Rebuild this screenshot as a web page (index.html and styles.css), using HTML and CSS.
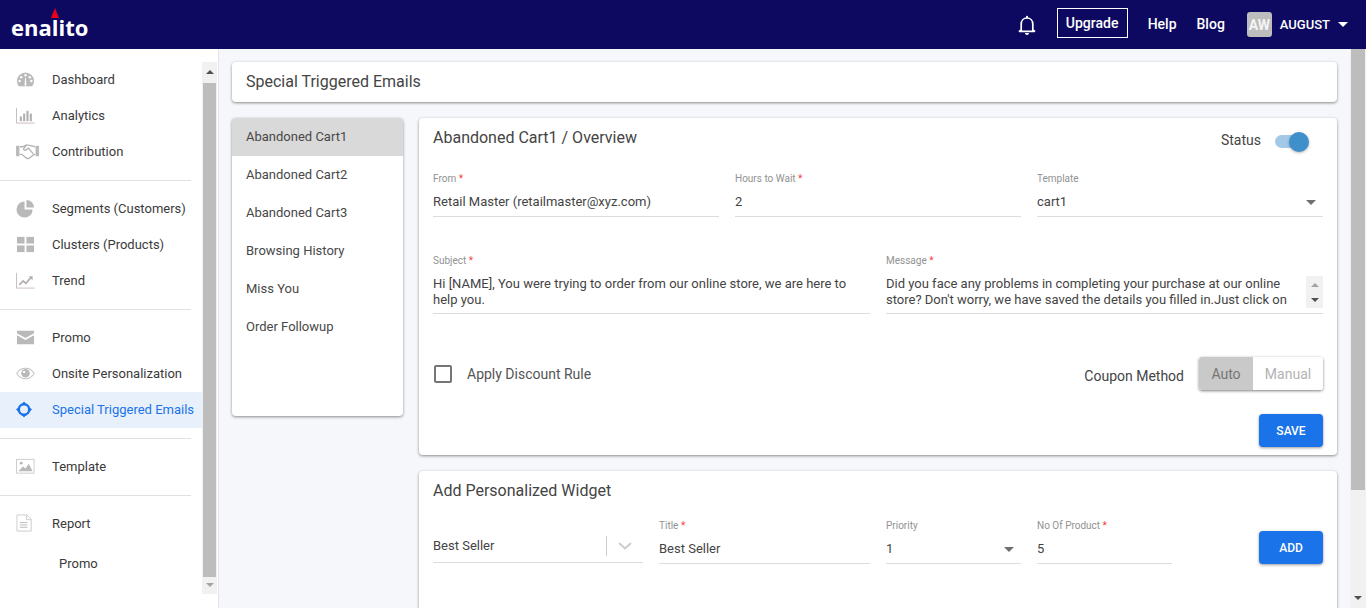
FILE: index.html
```html
<!DOCTYPE html>
<html lang="en">
<head>
<meta charset="utf-8">
<title>Special Triggered Emails</title>
<link rel="stylesheet" href="styles.css">
</head>
<body>
<div class="app">
  <header class="topbar">
    <div class="logo"><span class="logo-mark"></span>enalito</div>
    <div class="top-actions">
      <svg class="bell" width="18" height="20" viewBox="0 0 18 20"><path d="M3.2 15V9.2C3.2 5.6 5.6 3 9 3s5.800 2.600 5.800 6.200V15l1.700 1.300H1.500z" fill="none" stroke="#fff" stroke-width="1.700" stroke-linejoin="round"/><path d="M7 18h4a2 2 0 0 1-4 0zM8 1.800a1 1 0 0 1 2 0v1.500H8z" fill="#fff"/></svg>
      <a class="upgrade">Upgrade</a>
      <a class="top-link">Help</a>
      <a class="top-link">Blog</a>
      <div class="user">
        <span class="avatar">AW</span>
        <span class="user-name">AUGUST</span>
        <span class="caret"></span>
      </div>
    </div>
  </header>
  <div class="workspace">
    <aside class="sidebar">
      <nav class="nav">
        <div class="nav-group">
          <a class="nav-item"><svg class="ico" viewBox="0 0 20 20"><path d="M10 2.500a9 9 0 0 0-9 9c0 2.200.7 4 2 5.500h14c1.300-1.500 2-3.300 2-5.500a9 9 0 0 0-9-9z" fill="#b9b9b9"/><g fill="#fff"><circle cx="10" cy="5.500" r="1.300"/><circle cx="5.500" cy="7.500" r="1.300"/><circle cx="14.500" cy="7.500" r="1.300"/><circle cx="3.800" cy="11.500" r="1.300"/><circle cx="16.200" cy="11.500" r="1.300"/><path d="M9 15.500l.6-7h.8l.6 7a1 1 0 0 1-2 0z"/></g></svg><span>Dashboard</span></a>
          <a class="nav-item"><svg class="ico" viewBox="0 0 20 20"><path d="M.5 2v16h19" fill="none" stroke="#c9b9b9" stroke-width="1"/><g fill="#b0b0b0"><rect x="4" y="11" width="2.200" height="5"/><rect x="7.500" y="8" width="2.200" height="8"/><rect x="11" y="5" width="2.200" height="11"/><rect x="14.500" y="8" width="2.200" height="8"/></g></svg><span>Analytics</span></a>
          <a class="nav-item"><svg class="ico ico-wide" viewBox="0 0 24 20"><path d="M0 4h3.500v11H0zM20.500 4H24v11h-3.500z" fill="#b9b9b9"/><path d="M4 5h3l4-2 5 1 4 1M4 13h2l5 4c1 .6 2 .6 3-.2l5-3.800h1M11 3L8 7c-.6 1 1 2 2 1.500l3-2 5 6" fill="none" stroke="#b4b4b4" stroke-width="1.400"/></svg><span>Contribution</span></a>
        </div>
        <div class="nav-group">
          <a class="nav-item"><svg class="ico" viewBox="0 0 20 20"><path d="M9 2.500a8.500 8.500 0 1 0 8.500 8.500H9z" fill="#b9b9b9"/><path d="M11 1a8 8 0 0 1 8 8h-8z" fill="#b9b9b9"/></svg><span>Segments (Customers)</span></a>
          <a class="nav-item"><svg class="ico" viewBox="0 0 20 20"><g fill="#b9b9b9"><rect x="1" y="2" width="8" height="7"/><rect x="11" y="2" width="8" height="7"/><rect x="1" y="11" width="8" height="7"/><rect x="11" y="11" width="8" height="7"/></g></svg><span>Clusters (Products)</span></a>
          <a class="nav-item"><svg class="ico" viewBox="0 0 20 20"><path d="M.5 2v16h19" fill="none" stroke="#c9b9b9" stroke-width="1"/><path d="M3.500 14.500l4-4 3 2.500 5-6" fill="none" stroke="#b0b0b0" stroke-width="1.800"/><path d="M13.500 5.500H17.500V10z" fill="#b0b0b0"/></svg><span>Trend</span></a>
        </div>
        <div class="nav-group">
          <a class="nav-item"><svg class="ico" viewBox="0 0 20 20"><path d="M1 3h18v2.500l-9 5-9-5z" fill="#b9b9b9"/><path d="M1 7.500l9 5 9-5V17H1z" fill="#b9b9b9"/></svg><span>Promo</span></a>
          <a class="nav-item"><svg class="ico" viewBox="0 0 20 20"><path d="M.8 10C3 6.300 6.300 4.500 10 4.500s7 1.800 9.200 5.500C17 13.700 13.700 15.500 10 15.500S3 13.700.8 10z" fill="none" stroke="#c4c4c4" stroke-width="1.100"/><circle cx="10" cy="9.800" r="4.500" fill="#b9b9b9"/><circle cx="8.500" cy="8.300" r="1.300" fill="#fff"/></svg><span>Onsite Personalization</span></a>
          <a class="nav-item nav-active"><svg class="ico" viewBox="0 0 19 19"><circle cx="8" cy="9.500" r="5.200" fill="none" stroke="#1a73e8" stroke-width="2.400"/><g fill="#1a73e8"><path d="M8 1.500l2.800 3.200H5.200zM8 17.500l2.800-3.200H5.200zM0 9.500l3.200-2.800v5.600zM16 9.500l-3.200-2.800v5.600z"/></g></svg><span>Special Triggered Emails</span></a>
        </div>
        <div class="nav-group">
          <a class="nav-item"><svg class="ico" viewBox="0 0 20 20"><rect x=".5" y="2.500" width="18.500" height="14.500" fill="none" stroke="#ccc" stroke-width="1"/><path d="M2.500 15l5-5 2.500 2 3.500-5 4 8z" fill="#b9b9b9"/><circle cx="5.500" cy="6.500" r="1.500" fill="#b9b9b9"/></svg><span>Template</span></a>
        </div>
        <div class="nav-group">
          <a class="nav-item"><svg class="ico" viewBox="0 0 20 20"><path d="M1 1h10.500L16 5.500V18H1z" fill="none" stroke="#ccc" stroke-width="1"/><path d="M11 1v5h5" fill="none" stroke="#ccc"/><path d="M4 9h8M4 11.500h8M4 14h8" stroke="#b9b9b9" stroke-width="1"/></svg><span>Report</span></a>
          <a class="nav-item nav-sub"><span>Promo</span></a>
        </div>
      </nav>
      <div class="side-scroll">
        <span class="arrow-up"></span>
        <span class="side-thumb"></span>
        <span class="arrow-down arrow-light"></span>
      </div>
    </aside>
    <main class="content">
      <section class="card page-title">Special Triggered Emails</section>
      <div class="columns">
        <ul class="card list">
          <li class="list-item list-active">Abandoned Cart1</li>
          <li class="list-item">Abandoned Cart2</li>
          <li class="list-item">Abandoned Cart3</li>
          <li class="list-item">Browsing History</li>
          <li class="list-item">Miss You</li>
          <li class="list-item">Order Followup</li>
        </ul>
        <div class="detail">
          <section class="card overview">
            <div class="card-head">
              <h2 class="card-title">Abandoned Cart1 / Overview</h2>
              <div class="status">
                <span>Status</span>
                <span class="switch"><span class="knob"></span></span>
              </div>
            </div>
            <div class="row-three">
              <div class="field"><label class="lbl">From <i>*</i></label><div class="val">Retail Master (retailmaster@xyz.com)</div></div>
              <div class="field"><label class="lbl">Hours to Wait <i>*</i></label><div class="val">2</div></div>
              <div class="field"><label class="lbl">Template</label><div class="val val-select">cart1<span class="sel-caret"></span></div></div>
            </div>
            <div class="row-two">
              <div class="field"><label class="lbl">Subject <i>*</i></label><div class="val val-area">Hi [NAME], You were trying to order from our online store, we are here to help you.</div></div>
              <div class="field"><label class="lbl">Message <i>*</i></label>
                <div class="val val-area val-message">
                  <div class="msg-text">Did you face any problems in completing your purchase at our online store? Don't worry, we have saved the details you filled in.Just click on</div>
                  <div class="msg-scroll"><span class="arrow-up arrow-light"></span><span class="arrow-down"></span></div>
                </div>
              </div>
            </div>
            <div class="discount-row">
              <label class="check"><span class="box"></span>Apply Discount Rule</label>
              <div class="coupon">
                <span class="coupon-label">Coupon Method</span>
                <div class="segmented"><span class="seg seg-on">Auto</span><span class="seg">Manual</span></div>
              </div>
            </div>
            <div class="actions"><button class="btn">SAVE</button></div>
          </section>
          <section class="card widget">
            <h2 class="card-title">Add Personalized Widget</h2>
            <div class="widget-row">
              <div class="combo"><span class="combo-text">Best Seller</span><span class="combo-sep"></span><svg class="chev" width="14" height="8" viewBox="0 0 14 8"><path d="M1 1l6 5.500L13 1" fill="none" stroke="#ccc" stroke-width="2"/></svg></div>
              <div class="field f-title"><label class="lbl">Title <i>*</i></label><div class="val">Best Seller</div></div>
              <div class="field f-num"><label class="lbl">Priority</label><div class="val val-select">1<span class="sel-caret"></span></div></div>
              <div class="field f-num"><label class="lbl">No Of Product <i>*</i></label><div class="val">5</div></div>
              <button class="btn btn-add">ADD</button>
            </div>
          </section>
        </div>
      </div>
    </main>
    <div class="page-scroll">
      <span class="page-thumb"></span>
      <span class="arrow-down page-arrow"></span>
    </div>
  </div>
</div>
</body>
</html>
```

FILE: styles.css
```css
* { box-sizing: border-box; }
html, body { margin: 0; height: 100%; overflow: hidden; }
body { font-family: Roboto, "Liberation Sans", sans-serif; color: #3c3c3c; background: #f5f7fa; }
.app { display: flex; flex-direction: column; height: 608px; overflow: hidden; }

/* Top bar */
.topbar { flex: 0 0 49px; display: flex; align-items: center; justify-content: space-between; background: #0d0961; color: #fff; }
.logo { position: relative; margin-left: 11px; margin-top: 5px; font-family: "Open Sans", Roboto, sans-serif; font-size: 22px; font-weight: 700; line-height: 30px; }
.logo-mark { position: absolute; left: 40px; top: -4px; width: 0; height: 0; border-left: 4.500px solid transparent; border-right: 4.500px solid transparent; border-bottom: 10px solid #e8001c; }
.top-actions { display: flex; align-items: center; margin-right: 18px; }
.bell { margin-right: 21px; }
.upgrade { width: 71px; height: 30px; margin-right: 20px; margin-bottom: 3px; border: 1px solid #fff; display: flex; align-items: center; justify-content: center; font-size: 14px; font-weight: 500; }
.top-link { font-size: 14px; font-weight: 500; margin-right: 20px; margin-bottom: 2px; }
.top-link + .top-link { margin-right: 22px; }
.user { display: flex; align-items: center; }
.avatar { width: 25px; height: 25px; border-radius: 3px; background: #bdbdbd; color: #f4f4f4; font-size: 14px; font-weight: 700; display: flex; align-items: center; justify-content: center; }
.user-name { margin-left: 8px; font-size: 13px; font-weight: 500; }
.caret { margin-left: 8px; width: 0; height: 0; border-left: 5px solid transparent; border-right: 5px solid transparent; border-top: 5px solid #fff; }

.workspace { flex: 1; display: flex; min-height: 0; }

/* Sidebar */
.sidebar { flex: 0 0 219px; display: flex; background: #fff; border-right: 1px solid #e4e4e4; padding-top: 13px; align-items: flex-start; }
.nav { width: 202px; margin-top: -1px; }
.nav-group { padding: 9px 0 11px; position: relative; }
.nav-group:first-child { padding-top: 0; }
.nav-group + .nav-group::before { content: ""; position: absolute; left: 0; top: -1px; width: 191px; height: 1px; background: #e0e0e0; }
.nav-group + .nav-group { margin-top: 1px; }
.nav-item { display: flex; align-items: center; height: 36px; padding-left: 16px; font-size: 13px; color: #3a3a3a; }
.nav-item span { margin-left: 17px; }
.ico { flex: 0 0 19px; width: 19px; height: 19px; }
.ico-wide { flex-basis: 23px; width: 23px; margin-right: -4px; }
.nav-active { margin-top: 1px; margin-bottom: -1px; padding-bottom: 2px; background: #e8f0fb; color: #1a73e8; }
.nav-sub { margin-top: 4px; padding-left: 59px; }
.nav-sub span { margin-left: 0; }

.side-scroll { flex: 0 0 15px; height: 532px; background: #f1f1f1; display: flex; flex-direction: column; align-items: center; }
.side-thumb { width: 13px; height: 494px; background: #bdbdbd; }
.side-scroll .arrow-up { margin: 8px 0 9px; }
.side-scroll .arrow-down { margin-top: 6px; }
.arrow-up { width: 0; height: 0; border-left: 4px solid transparent; border-right: 4px solid transparent; border-bottom: 4px solid #505050; }
.arrow-down { width: 0; height: 0; border-left: 4px solid transparent; border-right: 4px solid transparent; border-top: 4px solid #505050; }
.arrow-up.arrow-light { border-bottom-color: #a3a3a3; }
.arrow-down.arrow-light { border-top-color: #a3a3a3; }

/* Content */
.content { flex: 1; min-width: 0; padding: 13px 13px 0; overflow: hidden; }
.card { background: #fff; border-radius: 4px; box-shadow: 0 1px 3px rgba(0,0,0,.45); }
.page-title { height: 40px; padding: 0 14px 2px; display: flex; align-items: center; font-size: 16px; color: #444; }
.columns { display: flex; gap: 16px; margin-top: 16px; align-items: flex-start; }
.list { flex: 0 0 171px; height: 298px; margin: 0; padding: 0; list-style: none; overflow: hidden; }
.list-item { height: 38px; padding: 0 0 2px 14px; display: flex; align-items: center; font-size: 13px; color: #484848; }
.list-active { background: #d9d9d9; }
.detail { flex: 1; min-width: 0; }
.overview { height: 337px; padding: 0 14px; }
.card-head { display: flex; justify-content: space-between; height: 44px; padding-top: 10px; }
.card-title { margin: 0; font-size: 16px; font-weight: 400; line-height: 19px; color: #444; }
.status { display: flex; align-items: flex-start; font-size: 14px; line-height: 24px; margin-right: 24px; color: #444; }
.switch { position: relative; width: 24px; height: 13px; margin: 7px 0 0 14px; background: #a3c9e8; border-radius: 7px; display: block; }
.knob { position: absolute; right: -10px; top: -3px; width: 20px; height: 20px; border-radius: 50%; background: #3f8fcb; box-shadow: 0 1px 3px rgba(0,0,0,.3); }

.row-three { display: grid; grid-template-columns: repeat(3, 1fr); gap: 16px; margin-top: 11px; }
.row-two { display: grid; grid-template-columns: repeat(2, 1fr); gap: 16px; margin-top: 38px; }
.field { min-width: 0; }
.lbl { display: block; font-size: 10px; line-height: 12px; color: #929292; }
.lbl i { font-style: normal; color: #f44336; }
.val { height: 31px; margin-top: 1px; padding-top: 8px; font-size: 13px; line-height: 16px; color: #444; border-bottom: 1px solid #dcdcdc; position: relative; }
.sel-caret { position: absolute; right: 7px; top: 14px; width: 0; height: 0; border-left: 5px solid transparent; border-right: 5px solid transparent; border-top: 5px solid #6f6f6f; }
.val-area { height: 45px; padding-top: 7px; margin-top: 2px; }
.val-message { display: flex; justify-content: space-between; padding-top: 0; }
.msg-text { padding-top: 7px; width: 405px; height: 44px; overflow: hidden; }
.msg-scroll { flex: 0 0 17px; height: 32px; margin-top: 7px; background: #f1f1f1; display: flex; flex-direction: column; align-items: center; justify-content: space-between; padding: 7px 0 6px; }

.discount-row { display: flex; justify-content: space-between; align-items: flex-start; margin-top: 43px; }
.check { display: flex; align-items: center; height: 20px; margin-top: 7px; font-size: 14px; color: #555; }
.box { width: 18px; height: 18px; margin: 0 15px 0 1px; border: 2px solid #757575; border-radius: 2px; }
.coupon { display: flex; align-items: flex-start; }
.coupon-label { font-size: 14px; line-height: 38px; color: #444; }
.segmented { display: flex; margin-left: 15px; height: 33px; border-radius: 3px; overflow: hidden; box-shadow: 0 1px 3px rgba(0,0,0,.5); }
.seg { display: flex; align-items: center; justify-content: center; width: 70px; font-size: 14px; color: #b2b2b2; background: #fff; }
.seg-on { width: 54px; background: #c8c9c8; color: #757575; }
.actions { display: flex; justify-content: flex-end; margin-top: 19px; }
.btn { width: 64px; height: 33px; border: 0; border-radius: 4px; background: #1a73e8; color: #fff; font-family: inherit; font-size: 12px; font-weight: 500; box-shadow: 0 1px 3px rgba(0,0,0,.4); }

.widget { height: 160px; margin-top: 16px; padding: 10px 14px 0; }
.widget-row { display: flex; align-items: flex-start; gap: 16px; margin-top: 20px; }
.combo { flex: 0 0 210px; height: 34px; margin-top: 9px; display: flex; align-items: center; border-bottom: 1px solid #dcdcdc; font-size: 13px; color: #444; }
.combo-text { flex: 1; }
.combo-sep { width: 1px; height: 20px; background: #ccc; margin-right: 11px; }
.chev { margin-right: 11px; }
.f-title { flex: 0 0 211px; }
.f-num { flex: 0 0 135px; }
.btn-add { margin: 11px 0 0 71px; }

/* Page scrollbar */
.page-scroll { flex: 0 0 16px; background: #f1f1f1; display: flex; flex-direction: column; align-items: center; justify-content: space-between; padding-bottom: 8px; }
.page-thumb { width: 14px; height: 441px; background: #bdbdbd; }
.page-arrow { flex: none; }
```
